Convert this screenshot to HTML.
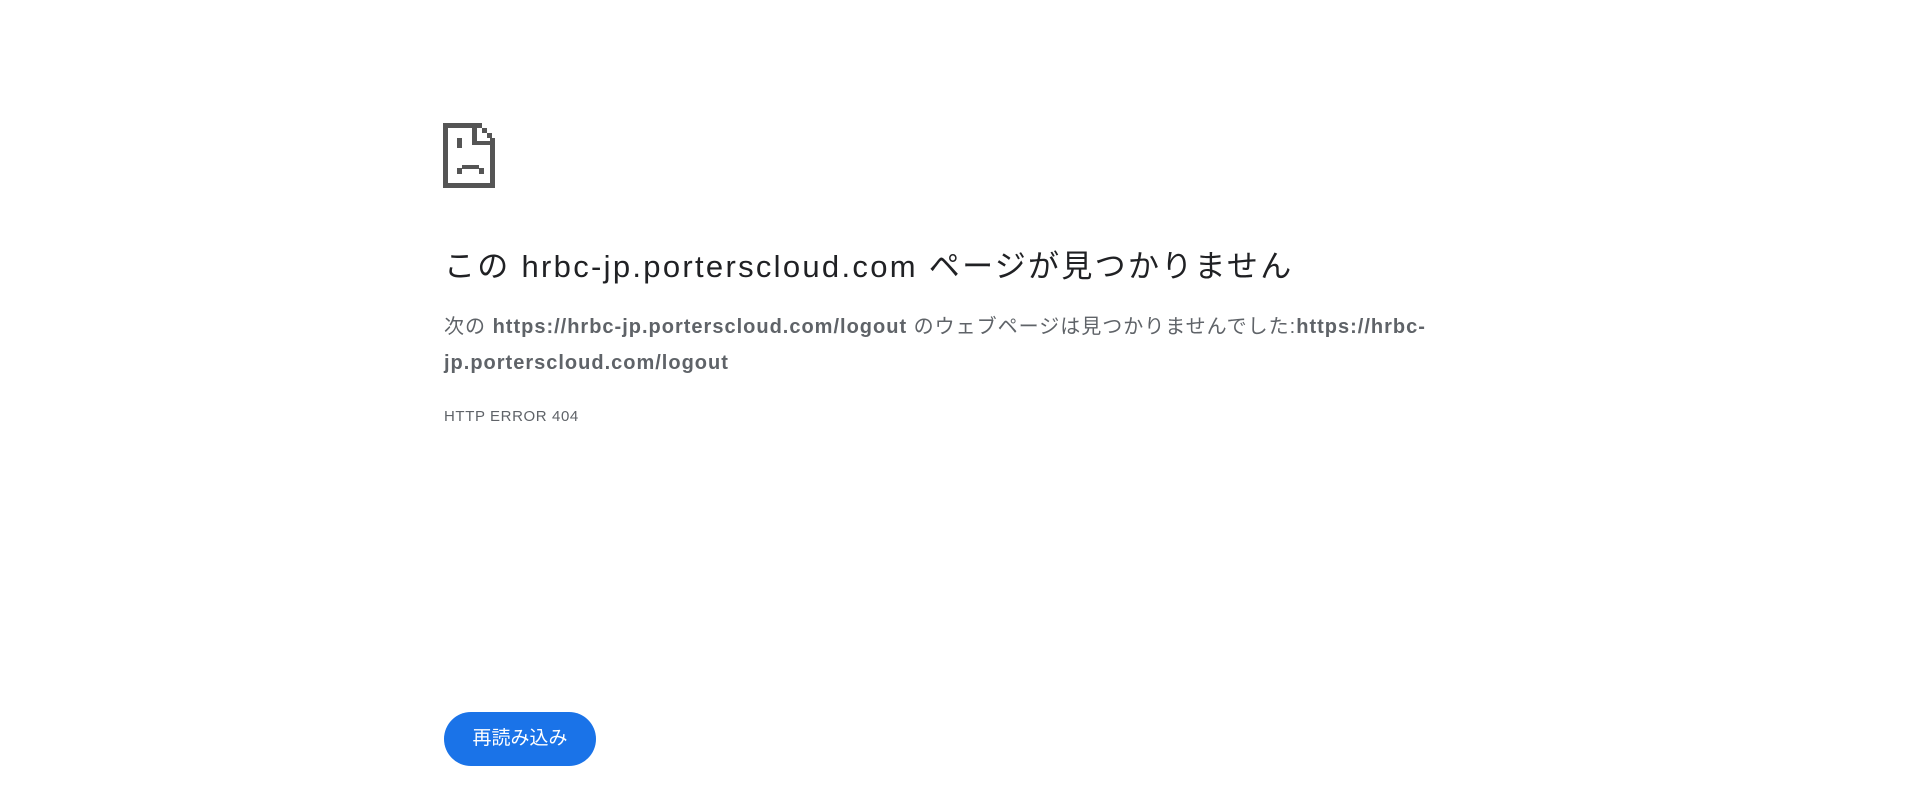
<!DOCTYPE html>
<html><head><meta charset="utf-8"><style>
html,body{margin:0;padding:0;background:#fff;width:1920px;height:800px;overflow:hidden}
body{font-family:"Liberation Sans","Noto Sans CJK JP",sans-serif;position:relative}
.icon{position:absolute;left:443px;top:123px}
h1{position:absolute;left:444px;top:245px;margin:0;font-weight:normal;font-size:31px;line-height:44px;color:#202124;white-space:nowrap;letter-spacing:2.3px}
.p{position:absolute;left:444px;top:309px;margin:0;font-size:20px;line-height:36px;color:#5f6368;white-space:nowrap;letter-spacing:1.0px}
.p b{color:#5f6368}
.code{position:absolute;left:444px;top:407px;font-size:15px;line-height:20px;color:#5f6368;letter-spacing:0.6px}
.btn{position:absolute;left:444px;top:712px;width:152px;height:54px;border-radius:27px;background:#1a73e8;color:#fff;font-size:19px;line-height:54px;text-align:center}
</style></head><body>
<svg class="icon" width="52" height="65" viewBox="0 0 52 65" fill="#555">
<rect x="0" y="0" width="5" height="65"/>
<rect x="0" y="60" width="52" height="5"/>
<rect x="0" y="0" width="39" height="5"/>
<rect x="47" y="15" width="5" height="50"/>
<rect x="39" y="5" width="5" height="5"/>
<rect x="44" y="10" width="5" height="5"/>
<rect x="29" y="0" width="5" height="22"/>
<rect x="29" y="18" width="23" height="4"/>
<rect x="14" y="15" width="5" height="10"/>
<rect x="19" y="42" width="17" height="4"/>
<rect x="14" y="45" width="5" height="6"/>
<rect x="36" y="45" width="5" height="6"/>
</svg>
<h1>この <b style="font-weight:normal">hrbc-jp.porterscloud.com</b> ページが見つかりません</h1>
<div class="p">次の <b>https://hrbc-jp.porterscloud.com/logout</b> のウェブページは見つかりませんでした:<b>https://hrbc-</b><br><b>jp.porterscloud.com/logout</b></div>
<div class="code">HTTP ERROR 404</div>
<div class="btn">再読み込み</div>
</body></html>
